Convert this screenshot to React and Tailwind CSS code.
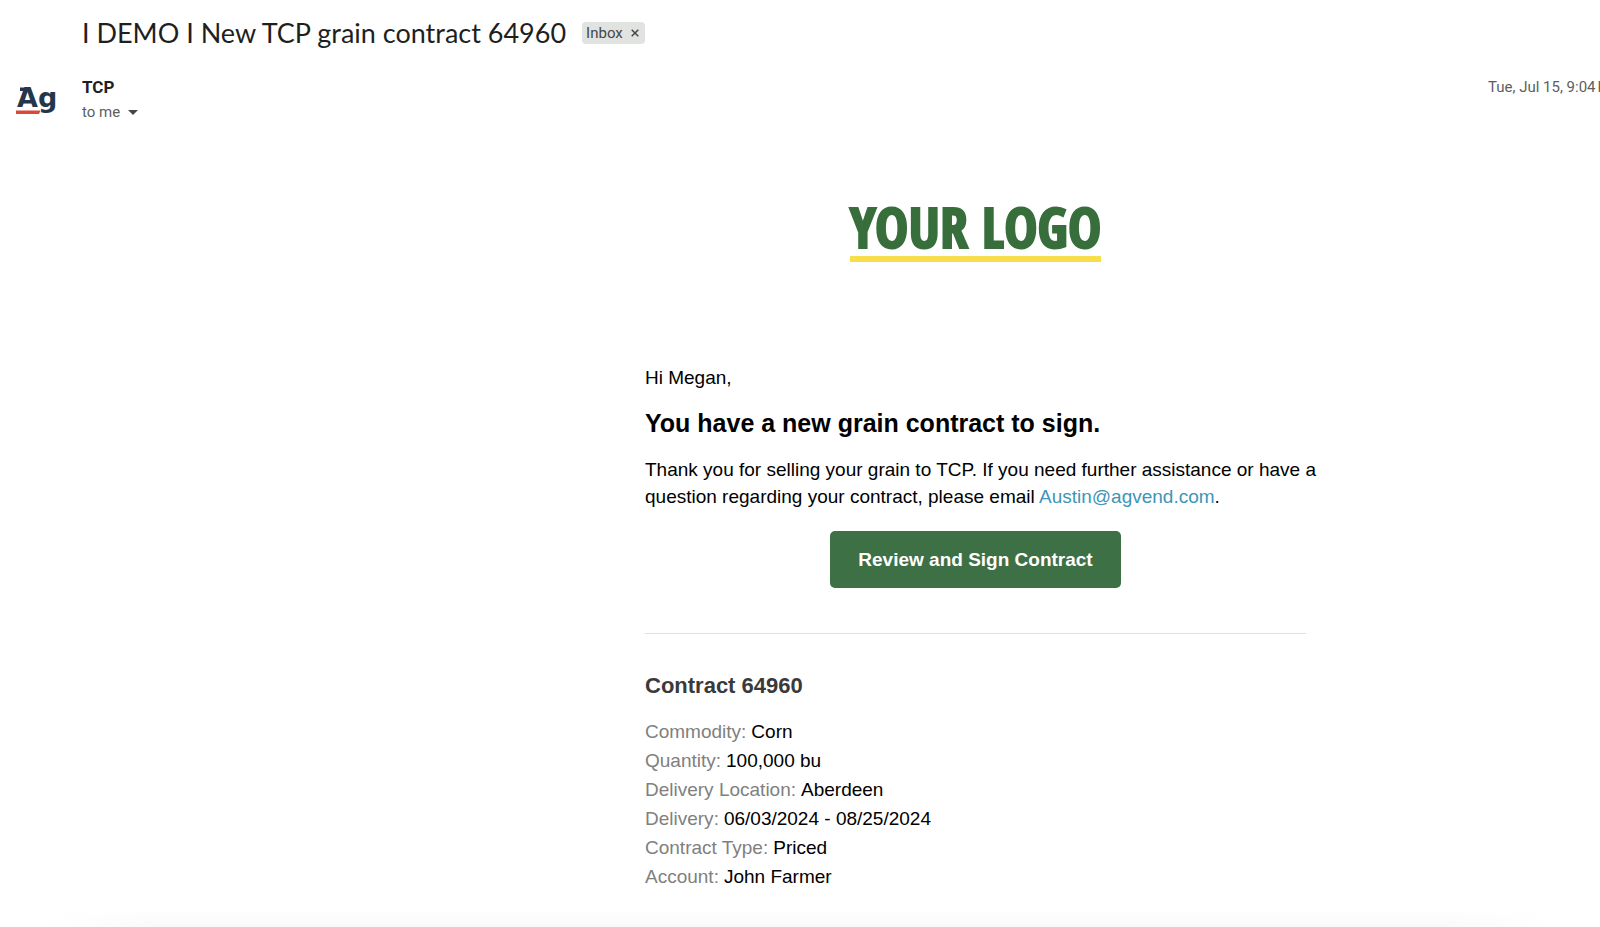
import React from 'react';

const contractDetails = [
  { label: 'Commodity', value: 'Corn' },
  { label: 'Quantity', value: '100,000 bu' },
  { label: 'Delivery Location', value: 'Aberdeen' },
  { label: 'Delivery', value: '06/03/2024 - 08/25/2024' },
  { label: 'Contract Type', value: 'Priced' },
  { label: 'Account', value: 'John Farmer' },
];

const SenderAvatar = () => (
  <svg className="h-12 w-12 shrink-0" viewBox="0 0 48 48" role="img" aria-label="Ag">
    <text x="5" y="31" className="fill-[#24364b] font-['DejaVu_Sans'] text-[27px] font-bold">Ag</text>
    <path d="M8 11.5h9v3.5H8z" fill="#24364b" />
    <path d="M4 34.5h24.500l-1.500 3.500H4z" fill="#d9493a" />
  </svg>
);

const Subject = () => (
  <div className="flex items-center gap-4 pl-[82px]">
    <h1 className="font-['Lato',sans-serif] text-[27px] leading-8 text-[#1f1f1f]">
      I DEMO I New TCP grain contract 64960
    </h1>
    <div className="flex h-[22px] items-center gap-2 rounded bg-[#e1e3e1] pr-1.5 pl-1 font-['Roboto',sans-serif] text-[15px] text-[#444746]">
      <span>Inbox</span>
      <button type="button" aria-label="Remove label">
        <svg className="h-2 w-2" viewBox="0 0 8 8" fill="none" stroke="#444746" strokeWidth="1.5">
          <path d="M0.7 0.7l6.6 6.6M7.3 0.7L0.7 7.3" />
        </svg>
      </button>
    </div>
  </div>
);

const Sender = () => (
  <div className="flex items-center pl-3 font-['Roboto',sans-serif] text-[15px] leading-[25px]">
    <SenderAvatar />
    <div className="ml-[22px] flex-1">
      <p className="text-[17px] font-bold text-[#1f1f1f]">TCP</p>
      <button type="button" className="flex items-center gap-2 text-[#5e5e5e]">
        to me
        <svg className="h-[5px] w-2.5" viewBox="0 0 10 5" fill="#444746">
          <path d="M0 0h10L5 5z" />
        </svg>
      </button>
    </div>
    <time className="w-28 shrink-0 self-start overflow-hidden whitespace-nowrap text-[#5e5e5e]">
      Tue, Jul 15, 9:04&#8239;PM
    </time>
  </div>
);

const Logo = () => (
  <div className="mx-auto w-fit border-b-[6px] border-[#f9de4b] font-['Open_Sans_Condensed','Roboto_Condensed',sans-serif] text-[56px] leading-[60px] font-extrabold text-[#376e3b] [-webkit-text-stroke:2px_#376e3b]">
    YOUR LOGO
  </div>
);

const App = () => {
  return (
    <div className="overflow-hidden bg-white">
      <header className="pt-[17px]">
        <Subject />
        <div className="mt-[26px]">
          <Sender />
        </div>
      </header>

      {/* Email body */}
      <main className="pt-[71px] pl-[351px] font-['Liberation_Sans',Arial,sans-serif] text-[19px] leading-[27px] text-black">
        <div className="mx-auto max-w-[661px]">
          <Logo />

          <p className="mt-[102px]">Hi Megan,</p>
          <h2 className="mt-[17px] text-[25px] leading-[30px] font-bold">You have a new grain contract to sign.</h2>
          <p className="mt-[18px] whitespace-nowrap">
            Thank you for selling your grain to TCP. If you need further assistance or have a
            <br />
            question regarding your contract, please email{' '}
            <a href="mailto:Austin@agvend.com" className="text-[#3d95b8]">Austin@agvend.com</a>.
          </p>

          <button
            type="button"
            className="mx-auto mt-[21px] block rounded-[5px] bg-[#3e7045] px-7 py-[15px] font-bold text-white"
          >
            Review and Sign Contract
          </button>

          <hr className="mt-[45px] border-[#e0e0e0]" />

          {/* Contract details */}
          <h3 className="mt-[37px] text-[22px] leading-[30px] font-bold text-[#3a3a3a]">Contract 64960</h3>
          <dl className="mt-4 leading-[29px]">
            {contractDetails.map(({ label, value }) => (
              <div key={label} className="flex gap-[5px]">
                <dt className="text-[#808080]">{label}:</dt>
                <dd>{value}</dd>
              </div>
            ))}
          </dl>
        </div>
      </main>

      {/* Soft shadow under the message */}
      <div className="mx-10 mt-[18px] h-[18px] bg-[linear-gradient(to_right,white,transparent_8%,transparent_92%,white),linear-gradient(white,#f9f9f9)]" />
    </div>
  );
};

export default App;
